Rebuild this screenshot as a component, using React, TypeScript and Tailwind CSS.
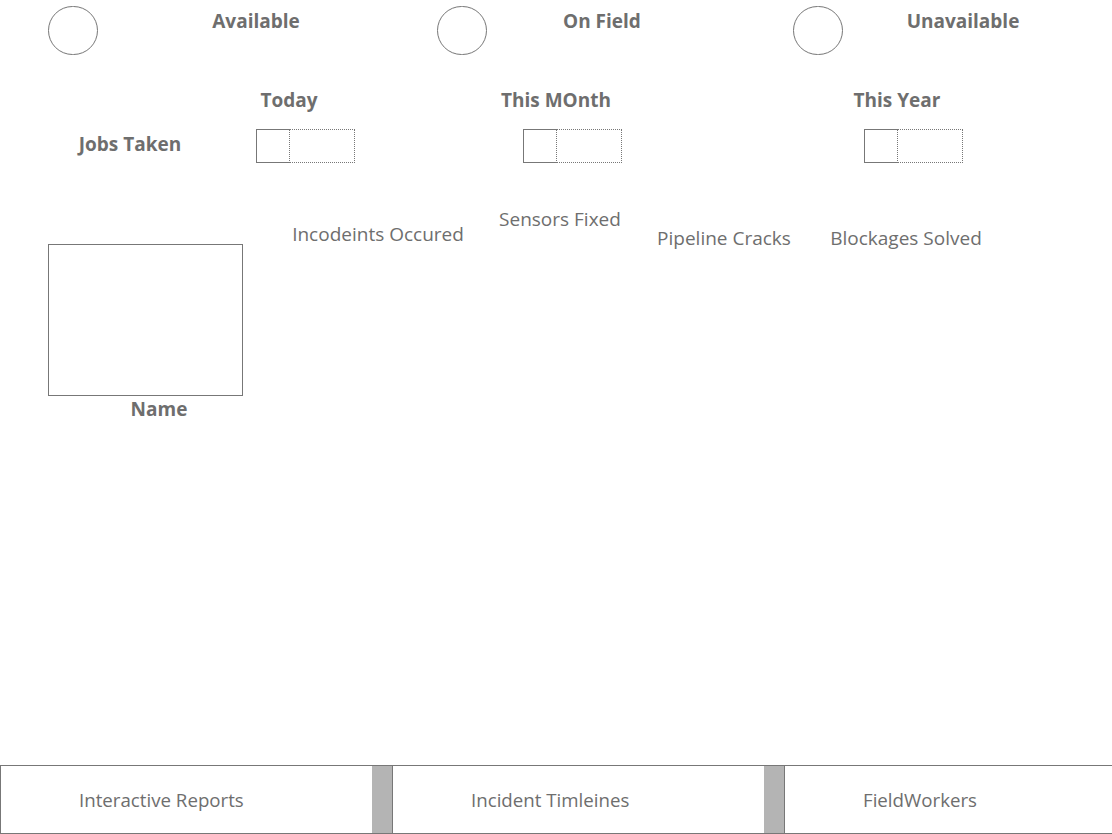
export default function App() {
  return (
    <div className="w-[1112px] h-[834px] bg-white flex flex-col text-[#6e6e6e] font-['Open_Sans',sans-serif] overflow-hidden">
      {/* status row */}
      <div className="flex items-start h-[60px]">
        <div className="ml-[48px] mt-[6px] w-[50px] h-[49px] rounded-full border border-[#777777] shrink-0" />
        <div className="ml-[78px] w-[160px] mt-[7px] flex justify-center whitespace-nowrap text-[19px] leading-[28px] font-bold">Available</div>
        <div className="ml-[101px] mt-[6px] w-[50px] h-[49px] rounded-full border border-[#777777] shrink-0" />
        <div className="ml-[35px] w-[160px] mt-[7px] flex justify-center whitespace-nowrap text-[19px] leading-[28px] font-bold">On Field</div>
        <div className="ml-[111px] mt-[6px] w-[50px] h-[49px] rounded-full border border-[#777777] shrink-0" />
        <div className="ml-[40px] w-[160px] mt-[7px] flex justify-center whitespace-nowrap text-[19px] leading-[28px] font-bold">Unavailable</div>
      </div>

      {/* period headers */}
      <div className="flex items-start h-[55px]">
        <div className="ml-[209px] w-[160px] mt-[26px] flex justify-center whitespace-nowrap text-[19px] leading-[28px] font-bold">Today</div>
        <div className="ml-[107px] w-[160px] mt-[26px] flex justify-center whitespace-nowrap text-[19px] leading-[28px] font-bold">This MOnth</div>
        <div className="ml-[181px] w-[160px] mt-[26px] flex justify-center whitespace-nowrap text-[19px] leading-[28px] font-bold">This Year</div>
      </div>

      {/* jobs taken */}
      <div className="flex items-start h-[60px]">
        <div className="ml-[50px] w-[160px] mt-[15px] flex justify-center whitespace-nowrap text-[19px] leading-[28px] font-bold">Jobs Taken</div>
        <div className="ml-[46px] mt-[14px] flex h-[34px]">
          <div className="w-[33px] border-l border-t border-b border-[#777777]" />
          <div className="w-[66px] border border-dotted border-[#777777]" />
        </div>
        <div className="ml-[168px] mt-[14px] flex h-[34px]">
          <div className="w-[33px] border-l border-t border-b border-[#777777]" />
          <div className="w-[66px] border border-dotted border-[#777777]" />
        </div>
        <div className="ml-[242px] mt-[14px] flex h-[34px]">
          <div className="w-[33px] border-l border-t border-b border-[#777777]" />
          <div className="w-[66px] border border-dotted border-[#777777]" />
        </div>
      </div>

      {/* worker + stats */}
      <div className="flex items-start">
        <div className="ml-[48px] w-[195px] mt-[69px] flex flex-col">
          <div className="h-[152px] border border-[#777777]" />
          <div className="pl-[27px] flex justify-center text-[19px] leading-[26px] font-bold">Name</div>
        </div>
        <div className="ml-[55px] w-[160px] mt-[45px] flex justify-center whitespace-nowrap text-[19px] leading-[28px]">Incodeints Occured</div>
        <div className="ml-[22px] w-[160px] mt-[30px] flex justify-center whitespace-nowrap text-[19px] leading-[28px]">Sensors Fixed</div>
        <div className="ml-[4px] w-[160px] mt-[49px] flex justify-center whitespace-nowrap text-[19px] leading-[28px]">Pipeline Cracks</div>
        <div className="ml-[22px] w-[160px] mt-[49px] flex justify-center whitespace-nowrap text-[19px] leading-[28px]">Blockages Solved</div>
      </div>

      <div className="flex-1" />

      {/* bottom nav */}
      <div className="flex h-[69px] border-t border-b border-[#777777]">
        <div className="w-[372px] border-l border-[#777777] flex items-center pl-[78px] pt-[2px] text-[18.7px] whitespace-nowrap">Interactive Reports</div>
        <div className="w-[20px] bg-[#b4b4b4]" />
        <div className="w-[372px] border-l border-[#777777] flex items-center pl-[78px] pt-[2px] text-[18.7px] whitespace-nowrap">Incident Timleines</div>
        <div className="w-[20px] bg-[#b4b4b4]" />
        <div className="flex-1 border-l border-[#777777] flex items-center pl-[78px] pt-[2px] text-[18.7px] whitespace-nowrap">FieldWorkers</div>
      </div>
    </div>
  );
}
